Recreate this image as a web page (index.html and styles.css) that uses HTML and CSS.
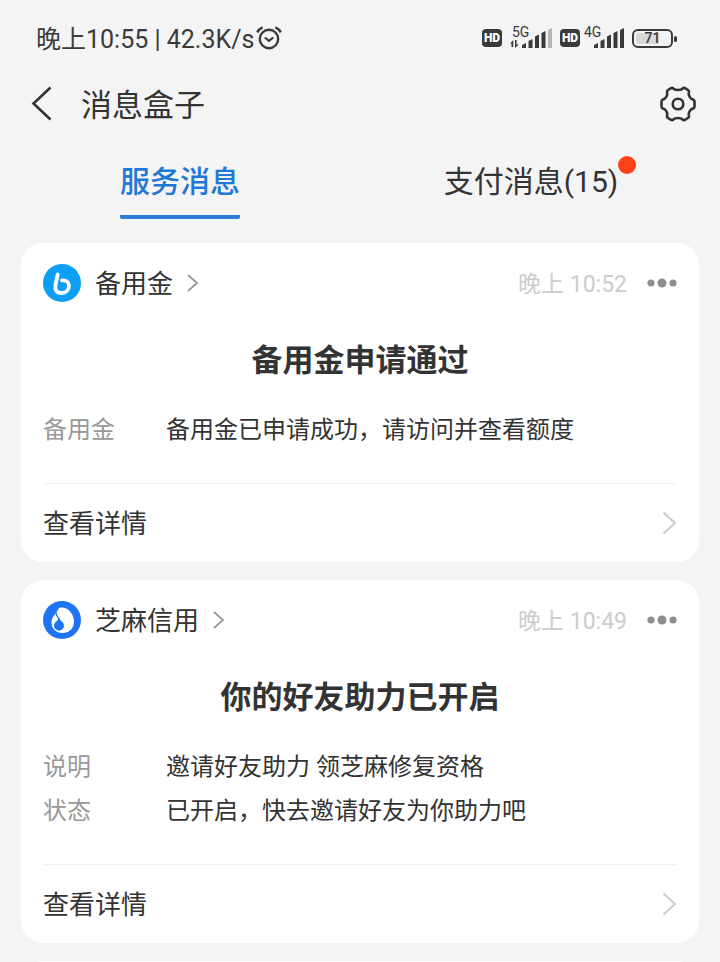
FILE: index.html
```
<!DOCTYPE html>
<html lang="zh-CN">
<head>
  <meta charset="UTF-8">
  <meta name="viewport" content="width=device-width, initial-scale=1.0">
  <title>消息盒子</title>
  <link rel="stylesheet" href="styles.css">
</head>
<body>
  <div class="status-bar">
    <div class="status-left">
      <span>晚上10:55 | 42.3K/s</span>
      <svg width="26" height="24" viewBox="0 0 26 24" fill="none" stroke="#3a3a3a" stroke-width="2.4">
        <circle cx="13" cy="13" r="9.2"/>
        <path d="M8.8 11.5l4.2 3.3 4.2-3.3" stroke-width="2.2"/>
        <path d="M1.2 6.4Q3 3 6.6 1.4M24.8 6.4Q23 3 19.4 1.4"/>
      </svg>
    </div>
    <div class="status-right">
      <span class="hd">HD</span>
      <div class="signal">
        <span class="network">5G</span>
        <svg width="42" height="20" viewBox="0 0 42 20" fill="#3a3a3a">
          <path d="M0 15.5L3.3 12v7H1.5v-3.5zM5 12h1.6v4.5h2.2L5 20z"/>
          <path d="M12 17l4-2v5h-4zM18.500 13l4-2v9h-4zM25 8.500l4-2V20h-4zM31.500 5l4-2v17h-4z"/>
          <path d="M38 2l4-2v20h-4z" fill="#b5b5b5"/>
        </svg>
      </div>
      <span class="hd">HD</span>
      <div class="signal signal-second">
        <span class="network">4G</span>
        <svg width="42" height="20" viewBox="0 0 42 20" fill="#3a3a3a">
          <path d="M12 17l4-2v5h-4zM18.500 13l4-2v9h-4zM25 8.500l4-2V20h-4zM31.500 5l4-2v17h-4zM38 2l4-2v20h-4z"/>
        </svg>
      </div>
      <div class="battery"><span class="battery-level">71</span></div>
    </div>
  </div>

  <header class="nav">
    <button type="button" class="icon-button" aria-label="返回">
      <svg width="22" height="36" viewBox="0 0 22 36" fill="none" stroke="#333" stroke-width="2.6">
        <path d="M19.500 1.500L2.500 17.500 19.500 33.500"/>
      </svg>
    </button>
    <h1>消息盒子</h1>
    <button type="button" class="icon-button" aria-label="设置">
      <svg width="36" height="36" viewBox="0 0 36 36" fill="none" stroke="#333" stroke-width="2.600" stroke-linejoin="round">
        <path d="M11 2.200Q12.500 1.500 13.500 2.700Q15 4 18 4T22.500 2.700Q23.500 1.500 25 2.200L28 4Q29.300 4.800 28.900 6.400Q28.300 8.600 29.700 10.900T33 13.500Q34.500 14 34.500 15.500V20.500Q34.500 22 33 22.500Q31 23 29.700 25.100T28.900 29.600Q29.300 31.200 28 32L25 33.800Q23.500 34.500 22.500 33.300Q21 32 18 32T13.500 33.300Q12.500 34.500 11 33.800L8 32Q6.700 31.200 7.100 29.600Q7.700 27.400 6.300 25.100T3 22.500Q1.500 22 1.500 20.500V15.500Q1.500 14 3 13.500Q5 13 6.300 10.900T7.100 6.400Q6.700 4.800 8 4Z"/>
        <circle cx="18" cy="18" r="5.300"/>
      </svg>
    </button>
  </header>

  <nav class="tabs">
    <button type="button" class="tab active"><span class="tab-text">服务消息</span></button>
    <button type="button" class="tab"><span class="tab-text">支付消息(15)</span><span class="dot"></span></button>
  </nav>

  <main class="messages">
    <article class="card">
      <div class="card-header">
        <a href="#" class="sender">
          <svg width="38" height="38" viewBox="0 0 38 38" fill="none">
            <circle cx="19" cy="19" r="19" fill="#0c9ff5"/>
            <path d="M14.700 10.500L12.600 20.500C11.300 26.500 14.200 29 18.600 29C22.900 29 26 26 26 21.800C26 18 23 16 19 16.400" stroke="#fff" stroke-width="3.800" stroke-linecap="round"/>
          </svg>
          <span class="sender-name">备用金</span>
          <svg width="12" height="20" viewBox="0 0 12 20" fill="none" stroke="#999" stroke-width="1.800"><path d="M1 2l9 8-9 8"/></svg>
        </a>
        <time>晚上 10:52</time>
        <button type="button" class="icon-button" aria-label="更多">
          <svg width="30" height="10" viewBox="0 0 30 10" fill="#8f8f8f"><circle cx="4" cy="5" r="3.600"/><circle cx="15" cy="5" r="4.500"/><circle cx="26" cy="5" r="3.600"/></svg>
        </button>
      </div>
      <h2>备用金申请通过</h2>
      <dl>
        <dt>备用金</dt>
        <dd>备用金已申请成功，请访问并查看额度</dd>
      </dl>
      <a href="#" class="detail">
        <span>查看详情</span>
        <svg width="15" height="24" viewBox="0 0 15 24" fill="none" stroke="#ccc" stroke-width="2"><path d="M1.500 1.500L13 12 1.500 22.500"/></svg>
      </a>
    </article>

    <article class="card">
      <div class="card-header">
        <a href="#" class="sender">
          <svg width="38" height="38" viewBox="0 0 38 38">
            <circle cx="19" cy="19" r="19" fill="#1f74f5"/>
            <path d="M17.500 6.500C25 5.500 31 13 31 20.500C31 27.500 26 32 19.500 32C13 32 8.500 27.500 8.500 21.500C8.500 16 12.500 13 14.500 9.500Q15.500 7 17.500 6.500Z" fill="#fff"/>
            <path d="M13.500 7C13 12 14.500 15 16.500 17.500Q17.500 19.500 18.500 20.300A5 5 0 1 1 13.500 20.300Q15.500 19 15 17.500C12.500 14 11.500 11 13.500 7Z" fill="#1f74f5"/>
          </svg>
          <span class="sender-name">芝麻信用</span>
          <svg width="12" height="20" viewBox="0 0 12 20" fill="none" stroke="#999" stroke-width="1.800"><path d="M1 2l9 8-9 8"/></svg>
        </a>
        <time>晚上 10:49</time>
        <button type="button" class="icon-button" aria-label="更多">
          <svg width="30" height="10" viewBox="0 0 30 10" fill="#8f8f8f"><circle cx="4" cy="5" r="3.600"/><circle cx="15" cy="5" r="4.500"/><circle cx="26" cy="5" r="3.600"/></svg>
        </button>
      </div>
      <h2>你的好友助力已开启</h2>
      <dl>
        <dt>说明</dt>
        <dd>邀请好友助力 领芝麻修复资格</dd>
        <dt>状态</dt>
        <dd>已开启，快去邀请好友为你助力吧</dd>
      </dl>
      <a href="#" class="detail">
        <span>查看详情</span>
        <svg width="15" height="24" viewBox="0 0 15 24" fill="none" stroke="#ccc" stroke-width="2"><path d="M1.500 1.500L13 12 1.500 22.500"/></svg>
      </a>
    </article>

    <article class="card"></article>
  </main>
</body>
</html>
```
FILE: styles.css
```
* {
  box-sizing: border-box;
}
body {
  display: flex;
  flex-direction: column;
  margin: 0;
  height: 100vh;
  overflow: hidden;
  background: #f4f4f4;
  color: #333;
  font-family: Roboto, "Noto Sans CJK SC", sans-serif;
}
h1, h2, dl, dd {
  margin: 0;
}
svg {
  display: block;
  flex: none;
}
a {
  color: inherit;
  text-decoration: none;
}
button {
  padding: 0;
  border: none;
  background: none;
  color: inherit;
  font-family: inherit;
  cursor: pointer;
}

/* phone status bar */
.status-bar {
  display: flex;
  flex: none;
  justify-content: space-between;
  align-items: center;
  height: 76px;
  padding: 0 47px 0 36px;
  color: #3a3a3a;
}
.status-left {
  display: flex;
  align-items: center;
  gap: 2px;
  font-size: 25px;
}
.status-left span {
  padding-bottom: 2px;
}
.status-right {
  display: flex;
  align-items: center;
  gap: 8px;
}
.hd {
  width: 20px;
  height: 18px;
  border-radius: 4px;
  background: #3a3a3a;
  color: #fff;
  font: 900 12px/18px Roboto, sans-serif;
  text-align: center;
}
.signal {
  position: relative;
}
.signal-second {
  margin-left: -6px;
}
.network {
  position: absolute;
  top: -3px;
  left: 2px;
  font: 14px/14px Roboto, sans-serif;
}
.battery {
  position: relative;
  width: 41px;
  height: 19px;
  padding: 2px;
  border: 2px solid #3a3a3a;
  border-radius: 6px;
}
.battery::after {
  content: "";
  position: absolute;
  top: 5px;
  right: -6px;
  width: 3px;
  height: 6px;
  border-radius: 2px;
  background: #3a3a3a;
}
.battery-level {
  display: block;
  border-radius: 3px;
  background: linear-gradient(to right, #d8d8d8 71%, transparent 71%);
  font: 500 14px/11px Roboto, sans-serif;
  text-align: center;
}

/* title and tabs */
.nav {
  display: flex;
  flex: none;
  align-items: center;
  height: 56px;
  padding: 0 24px 0 31px;
}
.nav h1 {
  flex: 1;
  padding: 0 0 4px 28px;
  font-size: 31px;
  font-weight: 400;
}
.tabs {
  display: flex;
  flex: none;
  height: 87px;
}
.tab {
  display: flex;
  flex: 1;
  justify-content: center;
  align-items: flex-start;
  padding-top: 24px;
  font-size: 30px;
  line-height: 52px;
}
.tab-text {
  height: 63px;
}
.active {
  color: #1f78d8;
  font-weight: 500;
}
.active .tab-text {
  border-bottom: 4px solid #2b7cd3;
  border-radius: 2px;
}
.dot {
  width: 18px;
  height: 18px;
  border-radius: 50%;
  background: #ff4118;
}

/* message cards */
.messages {
  display: flex;
  flex: 1;
  flex-direction: column;
  gap: 18px;
  min-height: 0;
  padding: 24px 21px 0;
  overflow: hidden;
}
.card {
  flex: none;
  min-height: 60px;
  padding: 0 22px;
  border-radius: 22px;
  background: #fff;
}
.card-header {
  display: flex;
  align-items: center;
  height: 80px;
}
.sender {
  display: flex;
  flex: 1;
  align-items: center;
  gap: 14px;
  font-size: 26px;
}
.sender-name {
  padding-bottom: 4px;
}
time {
  margin-right: 20px;
  padding-bottom: 2px;
  color: #ccc;
  font-size: 23px;
}
.card h2 {
  padding: 15px 0 24px;
  font-size: 31px;
  font-weight: 700;
  line-height: 46px;
  text-align: center;
}
dl {
  display: grid;
  grid-template-columns: 123px 1fr;
  padding-bottom: 31px;
  border-bottom: 1px solid #f0f0f0;
  font-size: 24px;
  line-height: 44px;
}
dt {
  color: #999;
}
.detail {
  display: flex;
  justify-content: space-between;
  align-items: center;
  height: 78px;
  font-size: 26px;
}
.detail span {
  padding-bottom: 4px;
}
```
